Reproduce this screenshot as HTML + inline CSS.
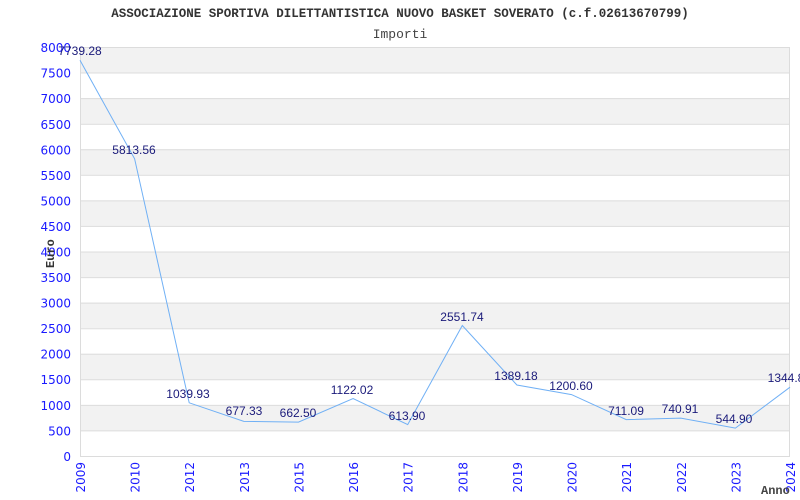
<!DOCTYPE html>
<html><head><meta charset="utf-8"><style>
html,body{margin:0;padding:0;background:#fff;width:800px;height:500px;overflow:hidden}
</style></head><body>
<svg width="800" height="500" xmlns="http://www.w3.org/2000/svg">
<rect width="800" height="500" fill="#fff"/>
<text x="400" y="17" font-family="Liberation Mono, monospace" font-size="12.5" font-weight="bold" fill="#333" text-anchor="middle">ASSOCIAZIONE SPORTIVA DILETTANTISTICA NUOVO BASKET SOVERATO (c.f.02613670799)</text>
<text x="400" y="38" font-family="Liberation Mono, monospace" font-size="13" fill="#444" text-anchor="middle">Importi</text>
<g fill="#f2f2f2">
<rect x="80" y="47" width="710" height="25.56"/>
<rect x="80" y="98.1" width="710" height="25.56"/>
<rect x="80" y="149.25" width="710" height="25.56"/>
<rect x="80" y="200.4" width="710" height="25.56"/>
<rect x="80" y="251.5" width="710" height="25.56"/>
<rect x="80" y="302.6" width="710" height="25.56"/>
<rect x="80" y="353.75" width="710" height="25.56"/>
<rect x="80" y="404.9" width="710" height="25.56"/>
</g>
<g stroke="#dcdcdc" stroke-width="1">
<line x1="80" y1="47.5" x2="790" y2="47.5"/>
<line x1="80" y1="73" x2="790" y2="73"/>
<line x1="80" y1="98.6" x2="790" y2="98.6"/>
<line x1="80" y1="124.2" x2="790" y2="124.2"/>
<line x1="80" y1="149.7" x2="790" y2="149.7"/>
<line x1="80" y1="175.3" x2="790" y2="175.3"/>
<line x1="80" y1="200.9" x2="790" y2="200.9"/>
<line x1="80" y1="226.4" x2="790" y2="226.4"/>
<line x1="80" y1="252" x2="790" y2="252"/>
<line x1="80" y1="277.6" x2="790" y2="277.6"/>
<line x1="80" y1="303.1" x2="790" y2="303.1"/>
<line x1="80" y1="328.7" x2="790" y2="328.7"/>
<line x1="80" y1="354.2" x2="790" y2="354.2"/>
<line x1="80" y1="379.8" x2="790" y2="379.8"/>
<line x1="80" y1="405.4" x2="790" y2="405.4"/>
<line x1="80" y1="430.9" x2="790" y2="430.9"/>
<line x1="80.5" y1="47" x2="80.5" y2="456.5"/>
<line x1="80" y1="456.5" x2="790" y2="456.5"/>
<line x1="789.5" y1="47" x2="789.5" y2="456.5"/>
</g>
<g font-family="DejaVu Sans, sans-serif" font-size="12" fill="#1a1aff" text-anchor="end">
<text x="71" y="52">8000</text><text x="71" y="77.5">7500</text><text x="71" y="103">7000</text><text x="71" y="129">6500</text>
<text x="71" y="154.5">6000</text><text x="71" y="180">5500</text><text x="71" y="205.5">5000</text><text x="71" y="231">4500</text>
<text x="71" y="256.5">4000</text><text x="71" y="282">3500</text><text x="71" y="307.5">3000</text><text x="71" y="333">2500</text>
<text x="71" y="358.5">2000</text><text x="71" y="384">1500</text><text x="71" y="410">1000</text><text x="71" y="435.5">500</text>
<text x="71" y="461">0</text>
</g>
<g font-family="DejaVu Sans, sans-serif" font-size="12" fill="#1a1aff" text-anchor="end">
<text transform="translate(85,462) rotate(-90)">2009</text>
<text transform="translate(139.6,462) rotate(-90)">2010</text>
<text transform="translate(194.2,462) rotate(-90)">2012</text>
<text transform="translate(248.8,462) rotate(-90)">2013</text>
<text transform="translate(303.5,462) rotate(-90)">2015</text>
<text transform="translate(358.1,462) rotate(-90)">2016</text>
<text transform="translate(412.7,462) rotate(-90)">2017</text>
<text transform="translate(467.3,462) rotate(-90)">2018</text>
<text transform="translate(521.9,462) rotate(-90)">2019</text>
<text transform="translate(576.5,462) rotate(-90)">2020</text>
<text transform="translate(631.2,462) rotate(-90)">2021</text>
<text transform="translate(685.8,462) rotate(-90)">2022</text>
<text transform="translate(740.4,462) rotate(-90)">2023</text>
<text transform="translate(795,462) rotate(-90)">2024</text>
</g>
<text transform="translate(54,268) rotate(-90)" font-family="Liberation Mono, monospace" font-size="12" font-weight="bold" fill="#333">Euro</text>
<text x="761" y="494" font-family="Liberation Mono, monospace" font-size="12" font-weight="bold" fill="#444">Anno</text>
<polyline fill="none" stroke="#70b0f5" stroke-width="1" points="80,60.3 134.6,158.8 189.2,402.8 243.8,421.4 298.5,422.1 353.1,398.6 407.7,424.6 462.3,325.5 516.9,385 571.5,394.6 626.2,419.6 680.8,418.1 735.4,428.1 790,387.2"/>
<g font-family="Liberation Sans, sans-serif" font-size="12" fill="#1a1a7a" text-anchor="middle">
<text x="80" y="55">7739.28</text>
<text x="134" y="154">5813.56</text>
<text x="188" y="398">1039.93</text>
<text x="244" y="415">677.33</text>
<text x="298" y="417">662.50</text>
<text x="352" y="394">1122.02</text>
<text x="407" y="420">613.90</text>
<text x="462" y="321">2551.74</text>
<text x="516" y="380">1389.18</text>
<text x="571" y="390">1200.60</text>
<text x="626" y="415">711.09</text>
<text x="680" y="413">740.91</text>
<text x="734" y="423">544.90</text>
<text x="786" y="382">1344.8</text>
</g>
</svg>
</body></html>
